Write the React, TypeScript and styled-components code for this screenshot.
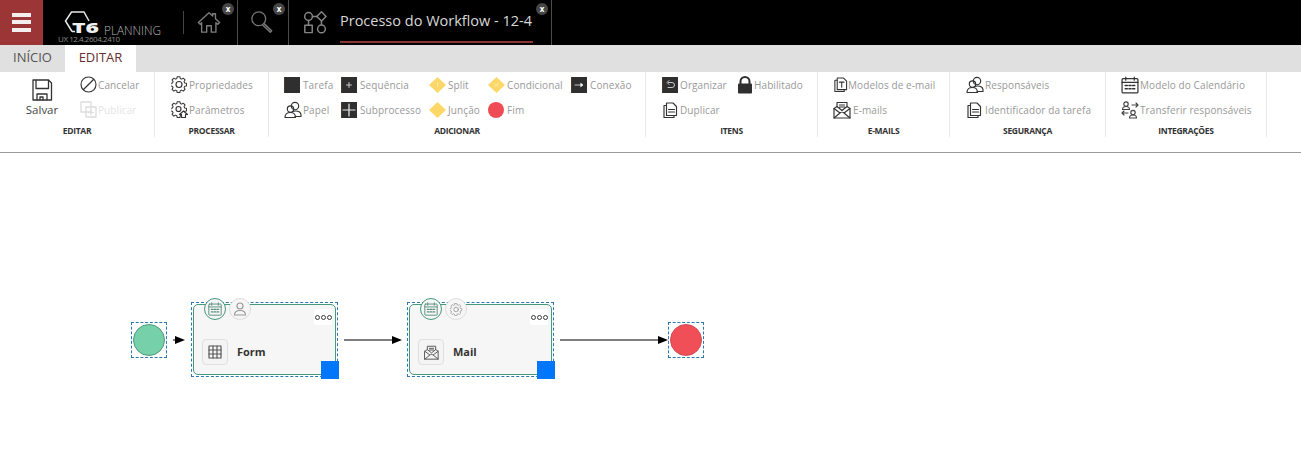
import React from "react";
import styled, { createGlobalStyle } from "styled-components";

const GlobalStyle = createGlobalStyle`
  html, body {
    margin: 0;
    padding: 0;
    background: #fff;
  }
  body {
    font-family: "Open Sans", "Liberation Sans", sans-serif;
    overflow: hidden;
  }
`;

type IconProps = { size?: number; color?: string };

const Stroke: React.FC<IconProps & { box?: number; children: React.ReactNode }> = ({
  size = 16,
  box = 16,
  color = "#333",
  children,
}) => (
  <svg
    width={size}
    height={size}
    viewBox={`0 0 ${box} ${box}`}
    fill="none"
    stroke={color}
    strokeWidth={1.15}
    strokeLinecap="round"
    strokeLinejoin="round"
    style={{ display: "block", flex: "none" }}
  >
    {children}
  </svg>
);

const HomeIcon = () => (
  <Stroke size={24} box={26} color="#7d7d7d">
    <path d="M1.5 13.5 13 3l4 3.6V4h3v5.4l4.5 4.1-2 2-2-1.8V24H15.5v-7h-5v7H5V13.7l-1.500 1.800z" strokeWidth={1.5} />
  </Stroke>
);

const SearchIcon = () => (
  <Stroke size={24} box={26} color="#777">
    <circle cx="9.500" cy="9.500" r="7.500" strokeWidth={1.4} />
    <path d="m15.500 15 8 7.500-1.500 1.500-8-7.500" strokeWidth={1.6} />
  </Stroke>
);

const WorkflowIcon = () => (
  <Stroke size={24} box={26} color="#858585">
    <circle cx="6" cy="7" r="4.200" strokeWidth={1.6} />
    <path d="M10.500 7h5" strokeWidth={1.6} />
    <path d="m20 2 5 5-5 5-5-5z" strokeWidth={1.6} />
    <path d="M6 11.500V16M20 12v4" strokeWidth={1.6} />
    <rect x="2" y="16.500" width="8" height="8" strokeWidth={1.6} />
    <circle cx="20" cy="20.500" r="4.200" strokeWidth={1.6} />
  </Stroke>
);

const SaveIcon = () => (
  <Stroke size={22} box={22} color="#333">
    <path d="M2 1h15.500L20.500 4v17H2z" strokeWidth={1.3} />
    <path d="M5 1.500v8h12.500v-8" strokeWidth={1.3} />
    <path d="M6 21v-6h10v6M9 21v-3h3v3" strokeWidth={1.3} />
  </Stroke>
);

const CancelIcon = () => (
  <Stroke size={17} box={17}>
    <circle cx="8.500" cy="8.500" r="7.500" />
    <path d="M3.500 13.500 13.500 3.500" />
  </Stroke>
);

const PublishIcon = () => (
  <Stroke size={17} box={17} color="#dcdcdc">
    <rect x="1" y="1" width="10" height="10" strokeWidth={1.3} />
    <rect x="6" y="6" width="10" height="10" strokeWidth={1.3} />
    <path d="M11 9v5M8.500 11.500h5" />
  </Stroke>
);

const GearShape = () => (
  <path d="M6.500 1h3l.4 2 1.500.7 1.800-1.100 2 2-1.100 1.800.7 1.500 2 .4v3l-2 .4-.7 1.500 1.100 1.800-2 2-1.800-1.100-1.500.7-.4 2h-3l-.4-2-1.500-.7-1.800 1.100-2-2 1.100-1.800-.7-1.500-2-.4v-3l2-.4.7-1.500-1.100-1.800 2-2 1.800 1.100 1.500-.7z" transform="scale(.9) translate(.4 -.2)" />
);

const GearIcon = ({ size = 17, color = "#333" }: IconProps) => (
  <Stroke size={size} box={17} color={color}>
    <GearShape />
    <circle cx="8" cy="8.500" r="3" />
  </Stroke>
);

const GearUpIcon = () => (
  <Stroke size={17} box={17}>
    <GearShape />
    <circle cx="7.500" cy="8" r="2.500" />
    <path d="M12.500 10 16.500 13.500h-2v3h-4v-3h-2z" fill="#fff" />
  </Stroke>
);

const UsersIcon = () => (
  <Stroke size={18} box={18}>
    <circle cx="11" cy="5" r="3.700" />
    <path d="M8.500 10.500c3-1 8-.5 8.500 3v2H11" />
    <circle cx="6.500" cy="8" r="3.200" />
    <path d="M1 16.500c0-3.500 2-5 5.500-5s5 1.500 5 5z" />
  </Stroke>
);

const DocsIcon = ({ letter, size = 16 }: { letter?: boolean; size?: number }) => (
  <Stroke size={size} box={16}>
    <path d="M4.500 1H11l3.500 3.500V13.500h-10z" />
    <path d="M4.500 3.500H2V15.500h10V13.500" />
    {letter ? (
      <path d="M6.800 5.500h5M9.300 5.500V11" />
    ) : (
      <path d="M6.500 7.500h6M6.500 10h6" />
    )}
  </Stroke>
);

const MailsIcon = ({ size = 18, color = "#333" }: IconProps) => (
  <Stroke size={size} box={18} color={color}>
    <path d="M1 7.500 4 5.500V1.500h10v4l3 2V17H1z" />
    <path d="M1 7.500 7 12l-6 5M17 7.500 11 12l6 5M7 12c1-1 3-1 4 0M4 5.500 9 9.500l5-4M6.500 4h5M6.500 6h5" />
  </Stroke>
);

const CalendarIcon = ({ size = 17, color = "#333" }: IconProps) => (
  <Stroke size={size} box={17} color={color}>
    <rect x="1" y="2.500" width="15" height="13.500" rx="1" />
    <path d="M1 6h15M4.500 1v3M12.500 1v3" />
    <path d="M4 9h2M7.500 9h2M11 9h2M4 12h2M7.500 12h2M11 12h2" strokeWidth={1.400} />
  </Stroke>
);

const TransferIcon = () => (
  <Stroke size={18} box={18} color="#444">
    <circle cx="5" cy="3" r="2.200" />
    <path d="M1.500 8.500c0-2 1.500-3 3.500-3s3.500 1 3.500 3z" />
    <path d="M11 4h6M15 2l2 2-2 2" />
    <circle cx="12" cy="11.500" r="2.200" />
    <path d="M8.500 17c0-2 1.500-3 3.500-3s3.500 1 3.500 3z" />
    <path d="M7 12H1M3 10l-2 2 2 2" />
  </Stroke>
);

const LockIcon = () => (
  <svg width="16" height="18" viewBox="0 0 16 18" style={{ display: "block", flex: "none" }}>
    <path d="M3.500 8V5.500a4.500 4.500 0 0 1 9 0V8" fill="none" stroke="#2f2f2f" strokeWidth="2" />
    <rect x="1" y="7.500" width="14" height="10" rx="1" fill="#2f2f2f" />
  </svg>
);

const DarkTile: React.FC<{ children?: React.ReactNode }> = ({ children }) => (
  <svg width="16" height="16" viewBox="0 0 16 16" style={{ display: "block", flex: "none" }}>
    <rect width="16" height="16" fill="#2f2f2f" />
    <rect width="1" height="16" fill="#4a3a2a" />
    <g fill="none" stroke="#eee" strokeWidth="0.800" strokeLinecap="round">
      {children}
    </g>
  </svg>
);

const Diamond: React.FC<{ children?: React.ReactNode }> = ({ children }) => (
  <svg width="17" height="16" viewBox="0 0 17 16" style={{ display: "block", flex: "none" }}>
    <path d="M8.500 0 17 8l-8.500 8L0 8z" fill="#fdd768" />
    <g fill="none" stroke="#f8eabc" strokeWidth="0.800">
      {children}
    </g>
  </svg>
);

const RedDot = styled.div`
  width: 16px;
  height: 16px;
  flex: none;
  border-radius: 50%;
  background: #ef4b55;
`;

const Page = styled.div`
  width: 1301px;
  height: 462px;
  display: flex;
  flex-direction: column;
  overflow: hidden;
  background: #fff;
`;

const Header = styled.header`
  height: 45px;
  flex: none;
  display: flex;
  background: #000;
`;

const MenuButton = styled.div`
  width: 43px;
  display: flex;
  flex-direction: column;
  align-items: center;
  gap: 3.500px;
  padding-top: 12.500px;
  box-sizing: border-box;
  background: #9c3535;
`;

const MenuBar = styled.span`
  width: 19px;
  height: 4px;
  background: #f4eeee;
`;

const LogoArea = styled.div`
  position: relative;
  width: 140px;
  flex: none;
`;

const LogoMark = styled.svg`
  position: absolute;
  left: 21px;
  top: 10px;
`;

const LogoT6 = styled.span`
  position: absolute;
  left: 29px;
  top: 22px;
  font-size: 13.500px;
  line-height: 12px;
  font-weight: 800;
  color: #eee;
  transform: scaleX(1.7);
  transform-origin: left center;
`;

const LogoPlanning = styled.span`
  position: absolute;
  left: 61px;
  top: 25px;
  font-size: 11.800px;
  line-height: 10px;
  font-weight: 300;
  color: #b5b5b5;
`;

const LogoVersion = styled.span`
  position: absolute;
  left: 15px;
  top: 35px;
  font-size: 8px;
  letter-spacing: -0.450px;
  line-height: 8px;
  color: #8a8a8a;
`;

const LogoDivider = styled.div`
  width: 1px;
  height: 23px;
  flex: none;
  align-self: center;
  margin-top: -1px;
  background: #444;
`;

const HeaderTab = styled.div<{ $width: number; $pad: number }>`
  position: relative;
  width: ${(p) => p.$width}px;
  flex: none;
  display: flex;
  align-items: flex-start;
  padding: 10px 0 0 ${(p) => p.$pad}px;
  box-sizing: border-box;
  border-right: 1px solid #4c4c4c;
`;

const CloseBadge = styled.span`
  position: absolute;
  right: 3px;
  top: 3px;
  width: 12px;
  height: 12px;
  border-radius: 50%;
  background: #464646;
  color: #fff;
  font-size: 8px;
  font-weight: 700;
  line-height: 11px;
  text-align: center;
`;

const ProcessTitle = styled.div`
  margin: -2px 0 0 13px;
  width: 193px;
  height: 33px;
  font-size: 14.500px;
  line-height: 26px;
  color: #d8d8d8;
  white-space: nowrap;
  border-bottom: 2px solid #8a3434;
`;

const TabBar = styled.nav`
  height: 27px;
  flex: none;
  display: flex;
  background: #e0e0e0;
`;

const Tab = styled.div<{ $active?: boolean }>`
  width: ${(p) => (p.$active ? 71 : 65)}px;
  text-align: center;
  font-size: 13px;
  line-height: 25px;
  background: ${(p) => (p.$active ? "#fff" : "transparent")};
  color: ${(p) => (p.$active ? "#6a2f2f" : "#555")};
`;

const Ribbon = styled.div`
  height: 81px;
  flex: none;
  display: flex;
  box-sizing: border-box;
  border-bottom: 1px solid #9a9a9a;
  background: #fff;
`;

const Group = styled.section<{ $width: number }>`
  width: ${(p) => p.$width}px;
  height: 65px;
  flex: none;
  display: flex;
  flex-direction: column;
  box-sizing: border-box;
  border-right: 1px solid #e8e8e8;
`;

const GroupBody = styled.div<{ $left: number }>`
  height: 51px;
  display: flex;
  padding-left: ${(p) => p.$left}px;
`;

const Column = styled.div<{ $width: number }>`
  width: ${(p) => p.$width}px;
  flex: none;
  display: flex;
  flex-direction: column;
`;

const Item = styled.div<{ $gap?: number }>`
  height: 25px;
  display: flex;
  align-items: center;
  gap: ${(p) => p.$gap ?? 1}px;
  white-space: nowrap;
`;

const ItemLabel = styled.span<{ $disabled?: boolean }>`
  font-size: 10px;
  letter-spacing: 0.100px;
  color: ${(p) => (p.$disabled ? "#e4e4e4" : "#999")};
`;

const SaveButton = styled.div`
  width: 54px;
  flex: none;
  display: flex;
  flex-direction: column;
  align-items: center;
  padding: 7px 22px 0 0;
  box-sizing: border-box;
  gap: 1px;
`;

const SaveLabel = styled.span`
  font-size: 11.500px;
  line-height: 16px;
  color: #444;
`;

const GroupTitle = styled.div`
  height: 14px;
  font-size: 8.500px;
  line-height: 16px;
  font-weight: 700;
  letter-spacing: -0.300px;
  text-align: center;
  color: #333;
`;

const Canvas = styled.main`
  position: relative;
  flex: 1;
  background: #fff;
`;

const EventBox = styled.div<{ $x: number; $y: number }>`
  position: absolute;
  left: ${(p) => p.$x}px;
  top: ${(p) => p.$y}px;
  width: 36px;
  height: 36px;
  box-sizing: border-box;
  display: flex;
  align-items: center;
  justify-content: center;
  border: 1px dashed #2b78b0;
`;

const EventCircle = styled.div<{ $end?: boolean }>`
  width: 32px;
  height: 32px;
  box-sizing: border-box;
  border-radius: 50%;
  background: ${(p) => (p.$end ? "#f04f57" : "#76d1ab")};
  border: 1px solid ${(p) => (p.$end ? "#cf5058" : "#4f9c7f")};
`;

const TaskFrame = styled.div<{ $x: number; $y: number }>`
  position: absolute;
  left: ${(p) => p.$x}px;
  top: ${(p) => p.$y}px;
  width: 147px;
  height: 75px;
  box-sizing: border-box;
  padding: 1px;
  border: 1px dashed #2b78b0;
`;

const TaskCard = styled.div`
  height: 100%;
  box-sizing: border-box;
  display: flex;
  align-items: flex-end;
  gap: 9px;
  padding: 0 0 9px 8px;
  background: #f6f6f6;
  border: 1.500px solid #46997c;
  border-radius: 5px;
`;

const BadgeRow = styled.div`
  position: absolute;
  left: 12px;
  top: -5px;
  display: flex;
  gap: 3px;
`;

const Badge = styled.div<{ $active?: boolean }>`
  width: 22px;
  height: 22px;
  box-sizing: border-box;
  display: flex;
  align-items: center;
  justify-content: center;
  border-radius: 50%;
  background: #f6f6f6;
  border: 1px solid ${(p) => (p.$active ? "#46997c" : "#dedede")};
`;

const DotsMenu = styled.div`
  position: absolute;
  right: 5px;
  top: 6px;
  width: 18px;
  height: 16px;
  display: flex;
  align-items: center;
  justify-content: center;
  gap: 1px;
  background: #fff;
  border-radius: 2px;
`;

const Dot = styled.span`
  width: 5px;
  height: 5px;
  box-sizing: border-box;
  border-radius: 50%;
  border: 1px solid #3a3a3a;
`;

const TypeTile = styled.div`
  width: 26px;
  height: 26px;
  box-sizing: border-box;
  display: flex;
  align-items: center;
  justify-content: center;
  background: #f4f4f4;
  border: 1px solid #e0e0e0;
  border-radius: 4px;
`;

const TaskName = styled.span`
  font-size: 11px;
  line-height: 26px;
  font-weight: 700;
  color: #333;
`;

const ResizeHandle = styled.div`
  position: absolute;
  right: -2px;
  bottom: -3px;
  width: 18px;
  height: 18px;
  background: #0077fb;
`;

const Arrow = styled.svg<{ $x: number; $y: number }>`
  position: absolute;
  left: ${(p) => p.$x}px;
  top: ${(p) => p.$y}px;
`;

const FlowArrow = ({ x, length }: { x: number; length: number }) => (
  <Arrow $x={x} $y={181} width={length} height={12} viewBox={`0 0 ${length} 12`}>
    <path d={`M0 6H${length - 9}`} stroke="#000" strokeWidth="1" />
    <path d={`M${length - 10} 2 ${length} 6 ${length - 10} 10z`} fill="#000" />
  </Arrow>
);

const GridIcon = () => (
  <Stroke size={14} box={14} color="#555">
    <rect x="1" y="1" width="12" height="12" />
    <path d="M5 1v12M9 1v12M1 5h12M1 9h12" />
  </Stroke>
);

const UserIcon = () => (
  <Stroke size={14} box={14} color="#999">
    <circle cx="7" cy="4" r="3" />
    <path d="M1.500 13c0-3 2-4.500 5.500-4.500s5.500 1.500 5.500 4.500z" />
  </Stroke>
);

type TaskProps = {
  x: number;
  name: string;
  tile: React.ReactNode;
  badge: React.ReactNode;
};

const TaskNode: React.FC<TaskProps> = ({ x, name, tile, badge }) => (
  <TaskFrame $x={x} $y={149}>
    <TaskCard>
      <TypeTile>{tile}</TypeTile>
      <TaskName>{name}</TaskName>
    </TaskCard>
    <BadgeRow>
      <Badge $active>
        <CalendarIcon size={14} color="#5a8f7c" />
      </Badge>
      <Badge>{badge}</Badge>
    </BadgeRow>
    <DotsMenu>
      <Dot />
      <Dot />
      <Dot />
    </DotsMenu>
    <ResizeHandle />
  </TaskFrame>
);

const App: React.FC = () => (
  <Page>
    <GlobalStyle />
    <Header>
      <MenuButton>
        <MenuBar />
        <MenuBar />
        <MenuBar />
      </MenuButton>
      <LogoArea>
        <LogoMark width="30" height="24" viewBox="0 0 30 24" fill="none">
          <path d="M8 21.500 1.500 11 7.500 2h12.500L25 11" stroke="#e8e8e8" strokeWidth="1.500" />
          <path d="M8 21.500h3" stroke="#e8e8e8" strokeWidth="1.500" />
        </LogoMark>
        <LogoT6>T6</LogoT6>
        <LogoPlanning>PLANNING</LogoPlanning>
        <LogoVersion>UX 12.4.2604.2410</LogoVersion>
      </LogoArea>
      <LogoDivider />
      <HeaderTab $width={54} $pad={13}>
        <HomeIcon />
        <CloseBadge>x</CloseBadge>
      </HeaderTab>
      <HeaderTab $width={51} $pad={12}>
        <SearchIcon />
        <CloseBadge>x</CloseBadge>
      </HeaderTab>
      <HeaderTab $width={263} $pad={14}>
        <WorkflowIcon />
        <ProcessTitle>Processo do Workflow - 12-4</ProcessTitle>
        <CloseBadge>x</CloseBadge>
      </HeaderTab>
    </Header>

    <TabBar>
      <Tab>INÍCIO</Tab>
      <Tab $active>EDITAR</Tab>
    </TabBar>

    <Ribbon>
      <Group $width={155}>
        <GroupBody $left={26}>
          <SaveButton>
            <SaveIcon />
            <SaveLabel>Salvar</SaveLabel>
          </SaveButton>
          <Column $width={70}>
            <Item>
              <CancelIcon />
              <ItemLabel>Cancelar</ItemLabel>
            </Item>
            <Item>
              <PublishIcon />
              <ItemLabel $disabled>Publicar</ItemLabel>
            </Item>
          </Column>
        </GroupBody>
        <GroupTitle>EDITAR</GroupTitle>
      </Group>

      <Group $width={114}>
        <GroupBody $left={16}>
          <Column $width={90}>
            <Item>
              <GearIcon />
              <ItemLabel>Propriedades</ItemLabel>
            </Item>
            <Item>
              <GearUpIcon />
              <ItemLabel>Parâmetros</ItemLabel>
            </Item>
          </Column>
        </GroupBody>
        <GroupTitle>PROCESSAR</GroupTitle>
      </Group>

      <Group $width={377}>
        <GroupBody $left={15}>
          <Column $width={57}>
            <Item $gap={3}>
              <DarkTile />
              <ItemLabel>Tarefa</ItemLabel>
            </Item>
            <Item>
              <UsersIcon />
              <ItemLabel>Papel</ItemLabel>
            </Item>
          </Column>
          <Column $width={88}>
            <Item $gap={3}>
              <DarkTile>
                <path d="M5.500 8h5M8 5.500v5" />
              </DarkTile>
              <ItemLabel>Sequência</ItemLabel>
            </Item>
            <Item $gap={3}>
              <DarkTile>
                <path d="M2 8h12M8 2v12" strokeWidth="1.200" />
              </DarkTile>
              <ItemLabel>Subprocesso</ItemLabel>
            </Item>
          </Column>
          <Column $width={59}>
            <Item $gap={2}>
              <Diamond>
                <path d="M8.500 5v5" />
              </Diamond>
              <ItemLabel>Split</ItemLabel>
            </Item>
            <Item $gap={2}>
              <Diamond />
              <ItemLabel>Junção</ItemLabel>
            </Item>
          </Column>
          <Column $width={83}>
            <Item $gap={2}>
              <Diamond>
                <path d="m6.500 6 4 4m0-4-4 4" />
              </Diamond>
              <ItemLabel>Condicional</ItemLabel>
            </Item>
            <Item $gap={3}>
              <RedDot />
              <ItemLabel>Fim</ItemLabel>
            </Item>
          </Column>
          <Column $width={60}>
            <Item $gap={3}>
              <DarkTile>
                <path d="M4 8h7" />
                <path d="m10 6.500 2 1.500-2 1.500z" fill="#fff" />
              </DarkTile>
              <ItemLabel>Conexão</ItemLabel>
            </Item>
          </Column>
        </GroupBody>
        <GroupTitle>ADICIONAR</GroupTitle>
      </Group>

      <Group $width={172}>
        <GroupBody $left={16}>
          <Column $width={75}>
            <Item $gap={2}>
              <DarkTile>
                <path d="M6.500 5.500h3.500a2.500 2.500 0 0 1 0 5H6" />
                <path d="m7 3.500-2 2 2 2" />
              </DarkTile>
              <ItemLabel>Organizar</ItemLabel>
            </Item>
            <Item $gap={2}>
              <DocsIcon />
              <ItemLabel>Duplicar</ItemLabel>
            </Item>
          </Column>
          <Column $width={70}>
            <Item>
              <LockIcon />
              <ItemLabel>Habilitado</ItemLabel>
            </Item>
          </Column>
        </GroupBody>
        <GroupTitle>ITENS</GroupTitle>
      </Group>

      <Group $width={132}>
        <GroupBody $left={15}>
          <Column $width={110}>
            <Item $gap={0}>
              <DocsIcon letter size={15} />
              <ItemLabel>Modelos de e-mail</ItemLabel>
            </Item>
            <Item $gap={2}>
              <MailsIcon />
              <ItemLabel>E-mails</ItemLabel>
            </Item>
          </Column>
        </GroupBody>
        <GroupTitle>E-MAILS</GroupTitle>
      </Group>

      <Group $width={156}>
        <GroupBody $left={16}>
          <Column $width={130}>
            <Item>
              <UsersIcon />
              <ItemLabel>Responsáveis</ItemLabel>
            </Item>
            <Item $gap={3}>
              <DocsIcon />
              <ItemLabel>Identificador da tarefa</ItemLabel>
            </Item>
          </Column>
        </GroupBody>
        <GroupTitle>SEGURANÇA</GroupTitle>
      </Group>

      <Group $width={161}>
        <GroupBody $left={15}>
          <Column $width={140}>
            <Item>
              <CalendarIcon size={18} />
              <ItemLabel>Modelo do Calendário</ItemLabel>
            </Item>
            <Item>
              <TransferIcon />
              <ItemLabel>Transferir responsáveis</ItemLabel>
            </Item>
          </Column>
        </GroupBody>
        <GroupTitle>INTEGRAÇÕES</GroupTitle>
      </Group>
    </Ribbon>

    <Canvas>
      <EventBox $x={131} $y={169}>
        <EventCircle />
      </EventBox>
      <FlowArrow x={173} length={12} />
      <TaskNode x={191} name="Form" tile={<GridIcon />} badge={<UserIcon />} />
      <FlowArrow x={344} length={58} />
      <TaskNode
        x={407}
        name="Mail"
        tile={<MailsIcon size={15} color="#555" />}
        badge={<GearIcon size={13} color="#999" />}
      />
      <FlowArrow x={560} length={108} />
      <EventBox $x={668} $y={169}>
        <EventCircle $end />
      </EventBox>
    </Canvas>
  </Page>
);

export default App;
